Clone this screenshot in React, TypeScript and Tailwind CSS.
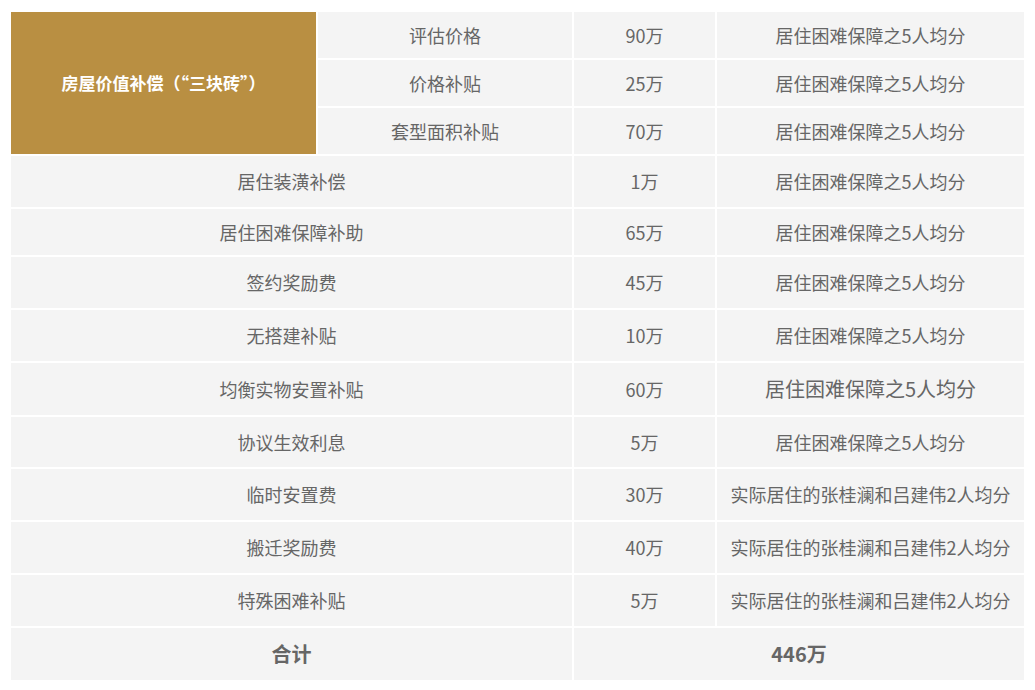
const rows: [string, string, string, boolean?][] = [
  ["居住装潢补偿", "1万", "居住困难保障之5人均分"],
  ["居住困难保障补助", "65万", "居住困难保障之5人均分"],
  ["签约奖励费", "45万", "居住困难保障之5人均分"],
  ["无搭建补贴", "10万", "居住困难保障之5人均分"],
  ["均衡实物安置补贴", "60万", "居住困难保障之5人均分", true],
  ["协议生效利息", "5万", "居住困难保障之5人均分"],
  ["临时安置费", "30万", "实际居住的张桂澜和吕建伟2人均分"],
  ["搬迁奖励费", "40万", "实际居住的张桂澜和吕建伟2人均分"],
  ["特殊困难补贴", "5万", "实际居住的张桂澜和吕建伟2人均分"],
];
const heights = ["h-[53px]", "h-[48px]", "h-[53px]", "h-[53px]", "h-[54px]", "h-[52px]", "h-[53px]", "h-[53px]", "h-[53px]"];
const td = "border-2 border-white bg-[#f4f4f4] text-center";

export default function App() {
  return (
    <div className="bg-white w-[1035px] h-[690px] pt-[10px] pl-[9px] text-[#666] text-[18px]" style={{ fontFamily: '"Microsoft YaHei", "Noto Sans CJK SC", sans-serif' }}>
      <table className="border-collapse table-fixed w-[1015px]">
        <colgroup>
          <col className="w-[307px]" />
          <col className="w-[256px]" />
          <col className="w-[143px]" />
          <col className="w-[309px]" />
        </colgroup>
        <tbody>
          <tr className="h-[48px]">
            <td rowSpan={3} className="border-2 border-white bg-[#b98f42] text-white font-bold text-[17px] text-center">房屋价值补偿（“三块砖”）</td>
            <td className={td}>评估价格</td>
            <td className={td}>90万</td>
            <td className={td}>居住困难保障之5人均分</td>
          </tr>
          <tr className="h-[48px]">
            <td className={td}>价格补贴</td>
            <td className={td}>25万</td>
            <td className={td}>居住困难保障之5人均分</td>
          </tr>
          <tr className="h-[48px]">
            <td className={td}>套型面积补贴</td>
            <td className={td}>70万</td>
            <td className={td}>居住困难保障之5人均分</td>
          </tr>
          {rows.map(([a, b, c, big], i) => (
            <tr key={i} className={heights[i]}>
              <td colSpan={2} className={td}>{a}</td>
              <td className={td}>{b}</td>
              <td className={`${td} ${big ? "text-[20px]" : ""}`}>{c}</td>
            </tr>
          ))}
          <tr className="h-[54px]">
            <td colSpan={2} className={`${td} font-bold text-[20px]`}>合计</td>
            <td colSpan={2} className={`${td} font-bold text-[20px]`}>446万</td>
          </tr>
        </tbody>
      </table>
    </div>
  );
}
